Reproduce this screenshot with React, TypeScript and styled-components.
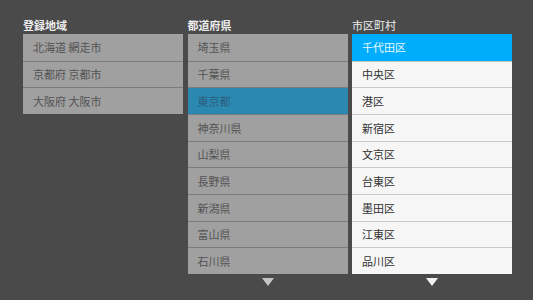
import React from 'react'
import styled, { createGlobalStyle } from 'styled-components'

const GlobalStyle = createGlobalStyle`
  html, body {
    margin: 0;
    padding: 0;
    background: #4a4a4a;
  }
  body {
    font-family: "Noto Sans CJK JP", "Noto Sans", sans-serif;
  }
`

const regions = ['北海道 網走市', '京都府 京都市', '大阪府 大阪市']
const prefectures = ['埼玉県', '千葉県', '東京都', '神奈川県', '山梨県', '長野県', '新潟県', '富山県', '石川県']
const wards = ['千代田区', '中央区', '港区', '新宿区', '文京区', '台東区', '墨田区', '江東区', '品川区']

type Tone = 'grey' | 'light'

export default function App() {
  return (
    <Screen>
      <GlobalStyle />
      <Column>
        <Label $bold>登録地域</Label>
        <List>
          {regions.map((r) => (
            <Row key={r} $tone="grey">{r}</Row>
          ))}
        </List>
      </Column>
      <Column>
        <Label $bold>都道府県</Label>
        <List>
          {prefectures.map((p, i) => (
            <Row key={p} $tone="grey" $selected={i === 2}>{p}</Row>
          ))}
        </List>
        <Arrow $tone="grey" />
      </Column>
      <Column>
        <Label>市区町村</Label>
        <List>
          {wards.map((w, i) => (
            <Row key={w} $tone="light" $selected={i === 0}>{w}</Row>
          ))}
        </List>
        <Arrow $tone="light" />
      </Column>
    </Screen>
  )
}

const Screen = styled.div`
  width: 533px;
  height: 300px;
  box-sizing: border-box;
  padding: 17px 0 0 23px;
  display: flex;
  gap: 4.5px;
  background: #4a4a4a;
  overflow: hidden;
`

const Column = styled.div`
  width: 160px;
  display: flex;
  flex-direction: column;
`

const Label = styled.div<{ $bold?: boolean }>`
  height: 17px;
  line-height: 17px;
  font-size: 11px;
  font-weight: ${(p) => (p.$bold ? 700 : 400)};
  color: #ececec;
`

const List = styled.div`
  display: flex;
  flex-direction: column;
`

const Row = styled.div<{ $tone: Tone; $selected?: boolean }>`
  height: 26.67px;
  box-sizing: border-box;
  padding-left: 10px;
  display: flex;
  align-items: center;
  font-size: 11px;
  background: ${(p) =>
    p.$tone === 'grey'
      ? p.$selected ? '#2b88b0' : '#a0a0a0'
      : p.$selected ? '#00adfd' : '#f6f6f6'};
  color: ${(p) =>
    p.$tone === 'grey'
      ? p.$selected ? '#2d5f80' : '#535353'
      : p.$selected ? '#e6f6ff' : '#333333'};
  border-top: 1px solid ${(p) => (p.$tone === 'grey' ? '#7c7c7c' : '#c8c8c8')};

  &:first-child {
    border-top: none;
  }
`

const Arrow = styled.div<{ $tone: Tone }>`
  align-self: center;
  margin-top: 4px;
  width: 0;
  height: 0;
  border-left: 6px solid transparent;
  border-right: 6px solid transparent;
  border-top: 8px solid ${(p) => (p.$tone === 'grey' ? '#c4c4c4' : '#f2f2f2')};
`
